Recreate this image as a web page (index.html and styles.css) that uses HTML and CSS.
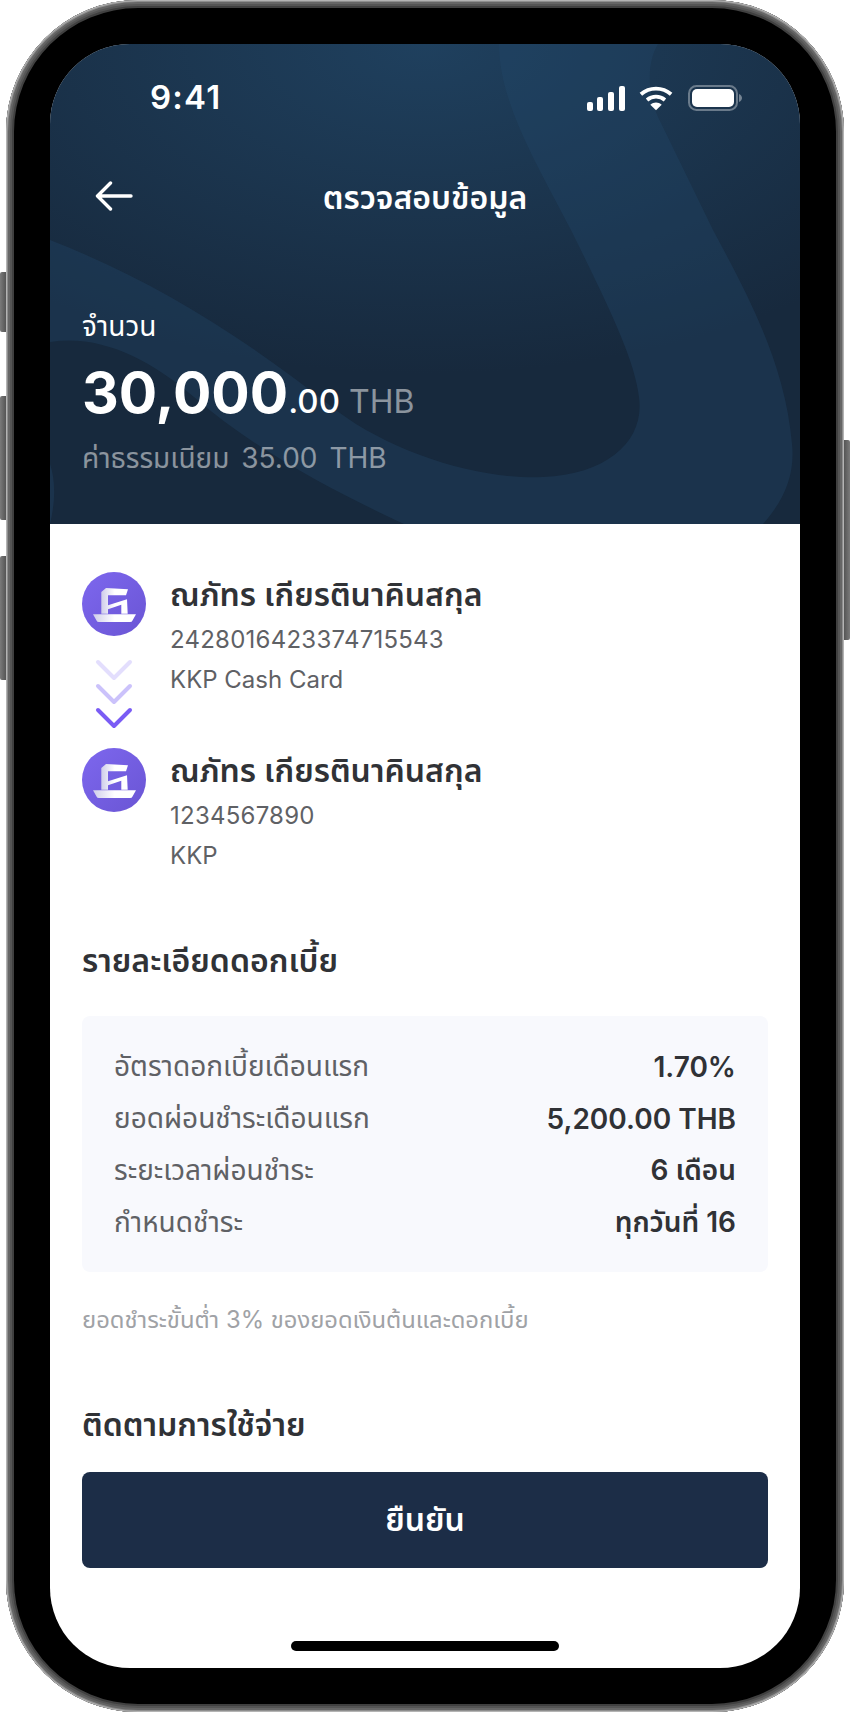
FILE: index.html
```html
<!DOCTYPE html>
<html lang="th">
<head>
    <meta charset="UTF-8">
    <meta name="viewport" content="width=device-width, initial-scale=1.0">
    <title>ตรวจสอบข้อมูล</title>
    <link rel="stylesheet" href="styles.css">
</head>
<body>
    <div class="phone">
        <span class="side-btn btn-mute"></span>
        <span class="side-btn btn-up"></span>
        <span class="side-btn btn-down"></span>
        <span class="side-btn btn-power"></span>

        <div class="bezel">
            <main class="screen">
                <header class="hero">
                    <svg class="hero-bg" viewBox="0 0 750 480" aria-hidden="true">
                        <path class="wave" d="M0 196 C100 235 190 290 287 367 C345 410 430 436 493 433 C560 430 595 395 589 353 C585 315 555 255 521 186 C490 125 449 60 449 0 L608 0 C596 20 598 50 608 73 L663 186 C700 255 735 320 742 400 C745 430 735 455 713 480 L354 480 C290 450 210 410 144 353 C100 315 50 290 0 298 Z"/>
                        <path class="wave" d="M0 420 C5 435 6 455 0 480 Z"/>
                    </svg>
                    <div class="status">
                        <span class="time">9:41</span>
                        <div class="status-icons">
                            <svg width="39" height="25" viewBox="0 0 39 25"><g fill="#fff"><rect x="0" y="16" width="6" height="9" rx="2"/><rect x="10" y="11" width="6" height="14" rx="2"/><rect x="21" y="6" width="6" height="19" rx="2"/><rect x="32" y="0" width="6" height="25" rx="2"/></g></svg>
                            <svg class="wifi" width="34" height="25" viewBox="0 0 36 25"><g fill="none" stroke="#fff" stroke-width="4"><path d="M2 8 C11 0 25 0 34 8"/><path d="M8.500 14 C14 9.500 22 9.500 27.500 14"/></g><path fill="#fff" d="M18 25 L12 19 C15.500 16 20.500 16 24 19 Z"/></svg>
                            <svg width="54" height="26" viewBox="0 0 54 26"><rect x="1" y="1" width="48" height="24" rx="7.500" fill="none" stroke="#fff" stroke-opacity=".35" stroke-width="2"/><rect x="4" y="4" width="42" height="18" rx="5" fill="#fff"/><path d="M51 9 C53 10 54 11.500 54 13 C54 14.500 53 16 51 17 Z" fill="#fff" fill-opacity=".4"/></svg>
                        </div>
                    </div>
                    <div class="nav">
                        <svg class="back" width="38" height="30" viewBox="0 0 38 30"><path d="M15.500 2 L2.500 15 L15.500 28 M3 15 H36" fill="none" stroke="#fff" stroke-width="3.400" stroke-linecap="round" stroke-linejoin="round"/></svg>
                        <h1 class="nav-title">ตรวจสอบข้อมูล</h1>
                    </div>
                    <div class="amount">
                        <p class="amount-label">จำนวน</p>
                        <p class="amount-value"><b>30,000</b><span class="cents">.00</span> <span class="currency">THB</span></p>
                        <p class="amount-fee">ค่าธรรมเนียม 35.00 THB</p>
                    </div>
                </header>

                <section class="content">
                    <div class="account">
                        <svg class="bank-logo" viewBox="0 0 64 64">
                            <defs>
                                <linearGradient id="disc" x1="0" y1="0" x2="1" y2="1"><stop offset="0" stop-color="#7d67ee"/><stop offset="1" stop-color="#6a55d4"/></linearGradient>
                                <linearGradient id="mark" x1="0" y1="0" x2="1" y2="0"><stop offset="0" stop-color="#cfcdea"/><stop offset=".5" stop-color="#fff"/><stop offset="1" stop-color="#fff"/></linearGradient>
                            </defs>
                            <circle cx="32" cy="32" r="32" fill="url(#disc)"/>
                            <path fill="url(#mark)" d="M19.300 20 L24 16 L46 17.300 L44 23.300 L26 23.300 L26 33.300 L45 27.300 L45.700 41.700 L39.300 41.700 L39.300 32.700 L26 37.300 L26 41.700 L19.300 41.700 Z"/>
                            <path fill="url(#mark)" d="M11 42.300 H54 L50.500 48.500 Q50 50 48 50 H17 Q15 50 14.500 48.500 Z"/>
                        </svg>
                        <div class="account-info">
                            <h2 class="account-name">ณภัทร เกียรตินาคินสกุล</h2>
                            <p class="account-line account-number">2428016423374715543</p>
                            <p class="account-line">KKP Cash Card</p>
                        </div>
                    </div>
                    <svg class="chevrons" width="38" height="72" viewBox="0 0 38 72" aria-hidden="true">
                        <g fill="none" stroke-width="4" stroke-linecap="round" stroke-linejoin="round">
                            <path stroke="#e3defd" d="M3 4 L19 20 L35 4"/>
                            <path stroke="#cbc2fb" d="M3 28 L19 44 L35 28"/>
                            <path stroke="#7a5cf5" d="M3 52 L19 68 L35 52"/>
                        </g>
                    </svg>
                    <div class="account account-to">
                        <svg class="bank-logo" viewBox="0 0 64 64">
                            <circle cx="32" cy="32" r="32" fill="url(#disc)"/>
                            <path fill="url(#mark)" d="M19.300 20 L24 16 L46 17.300 L44 23.300 L26 23.300 L26 33.300 L45 27.300 L45.700 41.700 L39.300 41.700 L39.300 32.700 L26 37.300 L26 41.700 L19.300 41.700 Z"/>
                            <path fill="url(#mark)" d="M11 42.300 H54 L50.500 48.500 Q50 50 48 50 H17 Q15 50 14.500 48.500 Z"/>
                        </svg>
                        <div class="account-info">
                            <h2 class="account-name">ณภัทร เกียรตินาคินสกุล</h2>
                            <p class="account-line account-number">1234567890</p>
                            <p class="account-line">KKP</p>
                        </div>
                    </div>

                    <h2 class="section-title interest-title">รายละเอียดดอกเบี้ย</h2>
                    <dl class="details">
                        <div class="detail-row"><dt>อัตราดอกเบี้ยเดือนแรก</dt><dd>1.70%</dd></div>
                        <div class="detail-row"><dt>ยอดผ่อนชำระเดือนแรก</dt><dd>5,200.00 THB</dd></div>
                        <div class="detail-row"><dt>ระยะเวลาผ่อนชำระ</dt><dd>6 เดือน</dd></div>
                        <div class="detail-row"><dt>กำหนดชำระ</dt><dd>ทุกวันที่ 16</dd></div>
                    </dl>
                    <p class="note">ยอดชำระขั้นต่ำ 3% ของยอดเงินต้นและดอกเบี้ย</p>

                    <h2 class="section-title track-title">ติดตามการใช้จ่าย</h2>
                    <button class="confirm" type="button">ยืนยัน</button>
                </section>
                <div class="home-bar"></div>
            </main>
        </div>
    </div>
</body>
</html>
```

FILE: styles.css
```css
* {
    box-sizing: border-box;
}
html, body {
    margin: 0;
    padding: 0;
    background: #fff;
}
body {
    font-family: Inter, "Noto Sans Thai", "Noto Sans", sans-serif;
    width: 850px;
    height: 1712px;
    overflow: hidden;
}
h1, h2, p, dl, dd {
    margin: 0;
}

/* device frame */
.phone {
    position: relative;
    width: 850px;
    height: 1712px;
    padding: 0 6px;
}
.bezel {
    height: 1712px;
    padding: 44px;
    background: #000;
    border-radius: 132px;
    box-shadow: inset 0 0 0 1px #b4b4b4, inset 0 0 0 2px #8e8e8e, inset 0 0 0 4px #666, inset 0 0 0 6px #555, inset 0 0 0 8px #404040;
}
.side-btn {
    position: absolute;
    left: 0;
    width: 6px;
    background: linear-gradient(90deg, #7a7a7a, #555);
    border-radius: 2px 0 0 2px;
}
.btn-mute { top: 272px; height: 60px; }
.btn-up { top: 396px; height: 124px; }
.btn-down { top: 556px; height: 124px; }
.btn-power {
    left: auto;
    right: 0;
    top: 440px;
    height: 200px;
    background: linear-gradient(90deg, #555, #7a7a7a);
    border-radius: 0 2px 2px 0;
}

.screen {
    position: relative;
    height: 1624px;
    background: #fff;
    border-radius: 80px;
    overflow: hidden;
}

/* header */
.hero {
    position: relative;
    height: 480px;
    color: #fff;
    background: radial-gradient(ellipse 600px 330px at 50% 0, #1f405e 0%, rgba(31, 64, 94, 0) 100%), #17293d;
}
.hero-bg {
    position: absolute;
    inset: 0;
    width: 100%;
    height: 100%;
}
.wave {
    fill: #21486b;
    opacity: .35;
}
.status {
    position: relative;
    display: flex;
    justify-content: space-between;
    align-items: center;
    height: 108px;
    padding: 0 58px 0 100px;
}
.time {
    position: relative;
    top: -1px;
    font-size: 33px;
    font-weight: 600;
    letter-spacing: 1.2px;
    line-height: 36px;
}
.status-icons {
    display: flex;
    align-items: center;
}
.wifi {
    margin: 0 15px 0 13px;
}
.nav {
    position: relative;
    display: flex;
    align-items: center;
    justify-content: center;
    height: 40px;
    margin-top: 26px;
}
.back {
    position: absolute;
    left: 45px;
    top: 3px;
}
.nav-title {
    font-size: 32px;
    font-weight: 600;
    line-height: 40px;
}
.amount {
    position: relative;
    padding: 90px 32px 0;
}
.amount-label {
    font-size: 28px;
    line-height: 36px;
}
.amount-value {
    margin-top: 13px;
    font-size: 32px;
    line-height: 72px;
    color: rgba(255, 255, 255, .5);
}
.amount-value b {
    font-size: 57px;
    font-weight: 700;
    color: #fff;
}
.cents {
    font-size: 33px;
    font-weight: 500;
    color: #fff;
}
.amount-fee {
    margin-top: 2px;
    font-size: 28px;
    line-height: 36px;
    word-spacing: 4px;
    color: rgba(255, 255, 255, .5);
}

/* body */
.content {
    padding: 48px 32px 0;
}
.account {
    display: flex;
    gap: 24px;
}
.bank-logo {
    width: 64px;
    height: 64px;
    flex: none;
}
.account-name {
    margin-bottom: 2px;
    font-size: 32px;
    font-weight: 600;
    line-height: 46px;
    color: #303236;
}
.account-line {
    font-size: 24px;
    line-height: 40px;
    color: #5f6165;
}
.account-number {
    letter-spacing: .24px;
}
.chevrons {
    display: block;
    margin: -42px 0 0 13px;
}
.account-to {
    margin-top: 18px;
}
.section-title {
    font-size: 32px;
    font-weight: 600;
    line-height: 44px;
    color: #303236;
}
.interest-title {
    margin-top: 63px;
}
.details {
    margin-top: 33px;
    padding: 25px 32px 23px;
    background: #f8f9fd;
    border-radius: 8px;
}
.detail-row {
    display: flex;
    justify-content: space-between;
    align-items: center;
    height: 52px;
}
.detail-row dt {
    font-size: 28px;
    color: #5f6165;
}
.detail-row dd {
    font-size: 28px;
    font-weight: 600;
    color: #303236;
}
.note {
    margin-top: 32px;
    font-size: 23.800px;
    line-height: 32px;
    color: #a0a2a6;
}
.track-title {
    margin-top: 67px;
}
.confirm {
    display: block;
    width: 100%;
    height: 96px;
    margin-top: 25px;
    padding-top: 2px;
    border: 0;
    border-radius: 8px;
    background: #1c2d47;
    color: #fff;
    font-family: inherit;
    font-size: 32px;
    font-weight: 600;
}
.home-bar {
    position: absolute;
    left: 241px;
    bottom: 17px;
    width: 268px;
    height: 10px;
    background: #000;
    border-radius: 5px;
}
```
